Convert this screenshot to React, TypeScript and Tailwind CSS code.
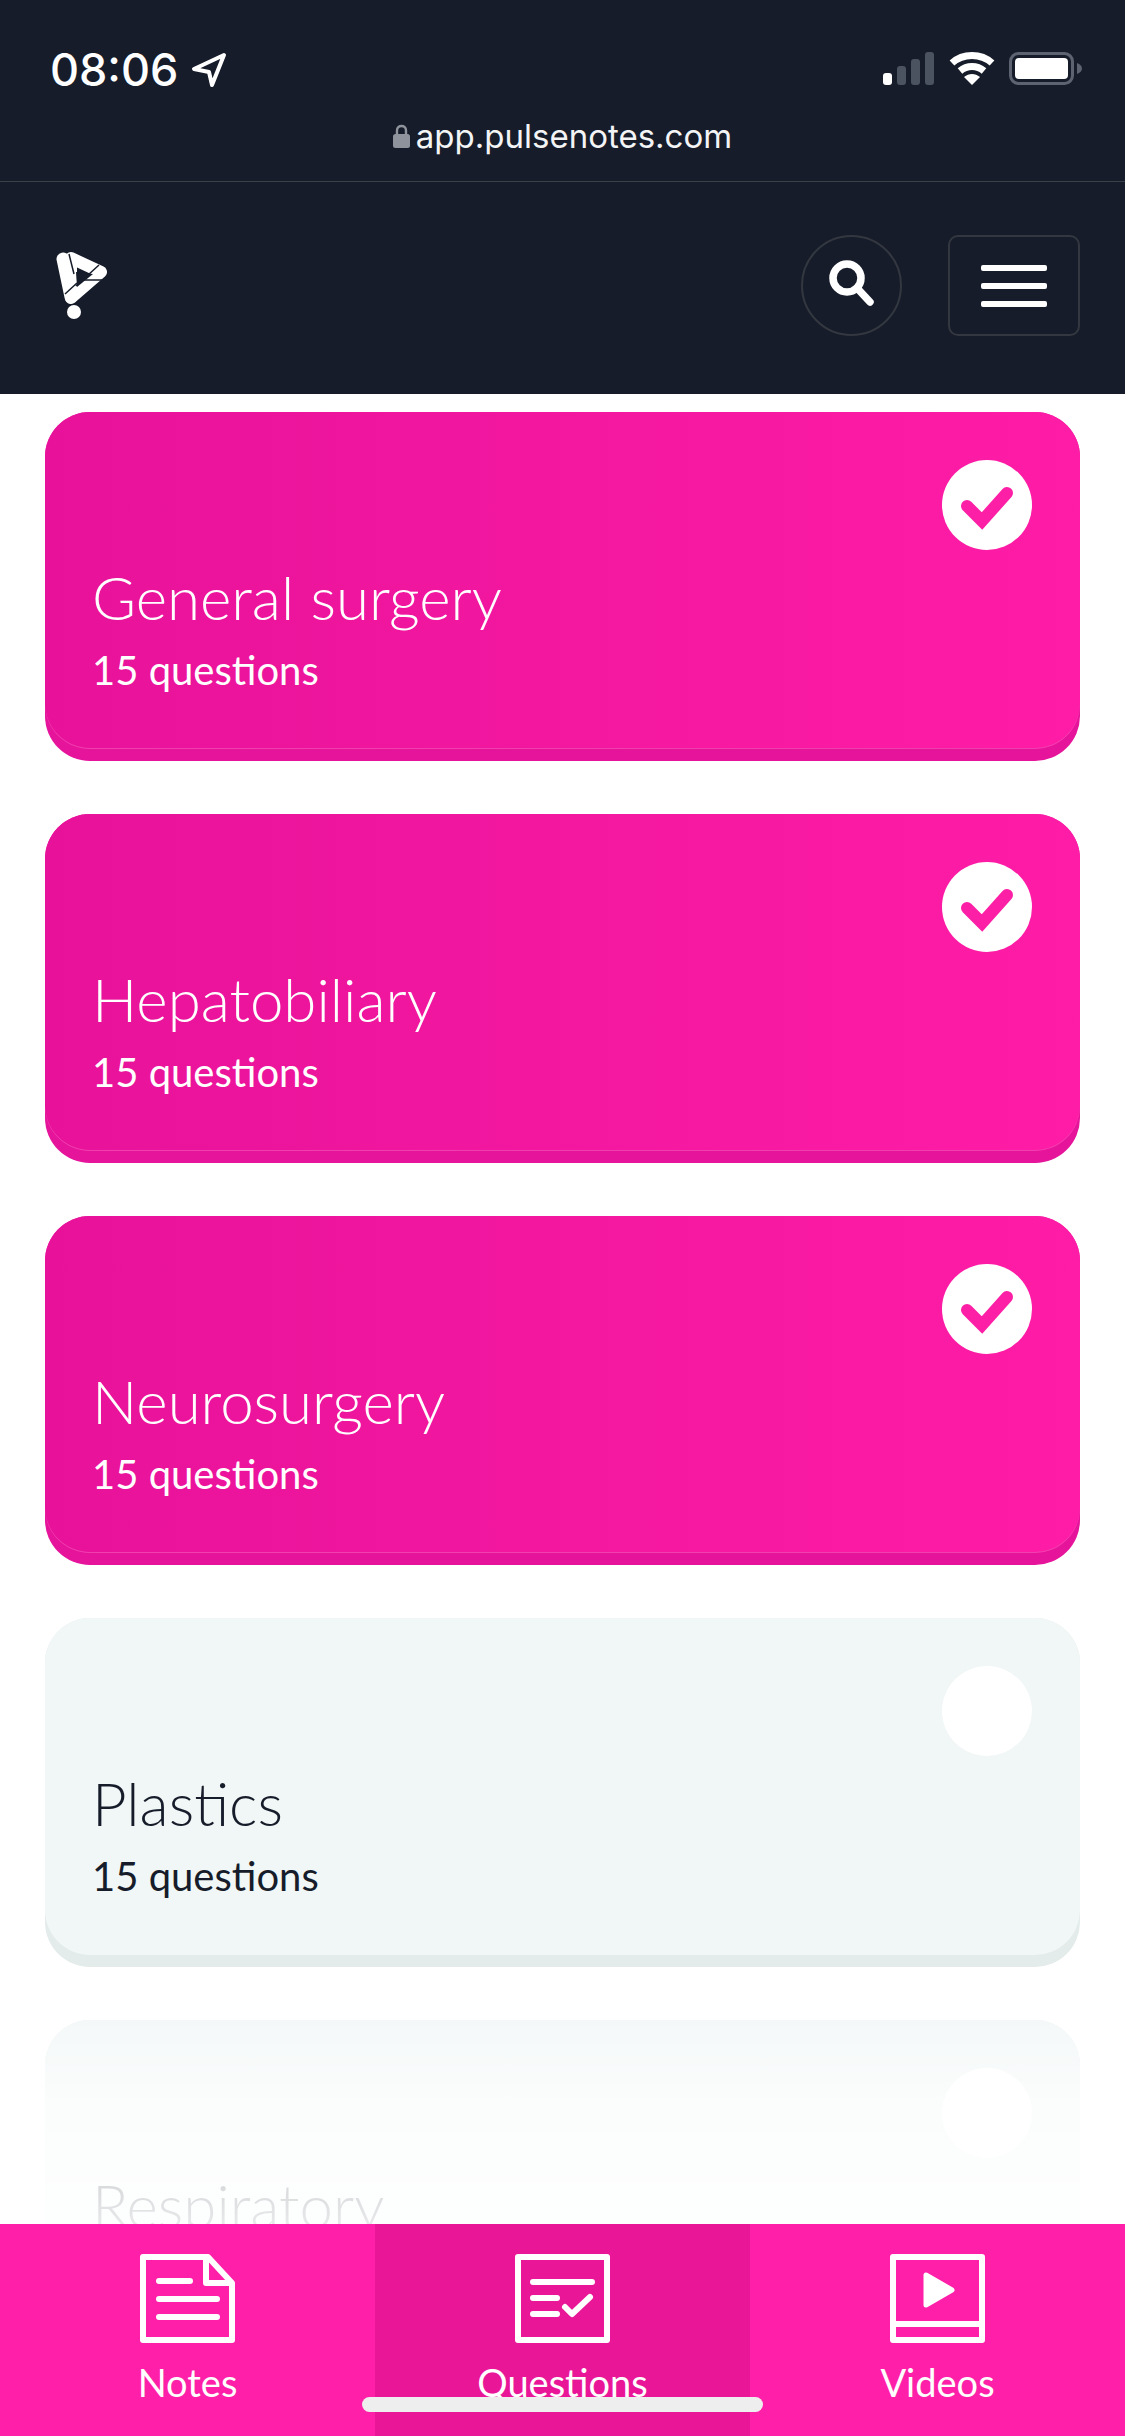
const cards = [
  { title: "General surgery", done: true },
  { title: "Hepatobiliary", done: true },
  { title: "Neurosurgery", done: true },
  { title: "Plastics", done: false },
  { title: "Respiratory", done: false },
];

function Check() {
  return (
    <svg width="90" height="90" viewBox="0 0 90 90" fill="none">
      <circle cx="45" cy="45" r="45" fill="#fff" />
      <path d="M25 46 40 61 65 33" stroke="#fd1fa6" strokeWidth="12" strokeLinecap="round" strokeLinejoin="miter" />
    </svg>
  );
}

function Card({ title, done }: { title: string; done: boolean }) {
  return (
    <div className={done ? "h-[349px] shrink-0 rounded-[45px] bg-[#e5149a] pb-[12px]" : "h-[349px] shrink-0 rounded-[45px] bg-[#e3ecea] pb-[12px]"}>
      <div
        className={
          done
            ? "flex h-full flex-col rounded-[45px] bg-gradient-to-r from-[#e8129a] to-[#ff1ca6] pl-[47px] pr-[48px] pt-[48px] text-white shadow-[inset_0_-1px_0_#f13fb0]"
            : "flex h-full flex-col rounded-[45px] bg-[#f1f6f6] pl-[47px] pr-[48px] pt-[48px] text-[#161c2a]"
        }
      >
        <div className="self-end">
          <Check0 done={done} />
        </div>
        <div className="mt-[11px] font-['Lato'] text-[60px] leading-[72px] font-light">{title}</div>
        <div className="mt-[12px] font-['Lato'] text-[40px] leading-[50px] font-normal">15 questions</div>
      </div>
    </div>
  );
}

function Check0({ done }: { done: boolean }) {
  return done ? <Check /> : <div className="h-[90px] w-[90px] rounded-full bg-white" />;
}

function NotesIcon() {
  return (
    <svg width="96" height="90" viewBox="0 0 96 90" fill="none" stroke="#fff" strokeWidth="6" strokeLinecap="round" strokeLinejoin="round">
      <path d="M3 3H68L92 29V86H3Z" />
      <path d="M66 4V29H91" />
      <path d="M19 27H50M19 45H77M19 63H77" />
    </svg>
  );
}
function QuestionsIcon() {
  return (
    <svg width="96" height="90" viewBox="0 0 96 90" fill="none" stroke="#fff" strokeWidth="6" strokeLinecap="round" strokeLinejoin="round">
      <path d="M3 3H92V86H3Z" />
      <path d="M18 28H77M18 44H42M18 60H42" />
      <path d="M50 53 57 60 75 43" />
    </svg>
  );
}
function VideosIcon() {
  return (
    <svg width="96" height="90" viewBox="0 0 96 90" fill="none" stroke="#fff" strokeWidth="6" strokeLinecap="round" strokeLinejoin="round">
      <path d="M3 3H92V86H3Z" />
      <path d="M3 70H92" strokeLinecap="butt" />
      <path d="M36 21V51L62 36Z" fill="#fff" strokeWidth="5" />
    </svg>
  );
}

const tabs = [
  { label: "Notes", Icon: NotesIcon, active: false },
  { label: "Questions", Icon: QuestionsIcon, active: true },
  { label: "Videos", Icon: VideosIcon, active: false },
];

export default function App() {
  return (
    <div className="relative flex h-[2436px] w-[1125px] flex-col overflow-hidden bg-white font-['Inter',sans-serif]">
      <header className="h-[394px] shrink-0 bg-[#161c2a] text-white">
        <div className="flex h-[182px] flex-col border-b border-[#3c4048]">
          <div className="flex h-[116px] items-start justify-between pl-[50px] pr-[43px] pt-[46px]">
            <div className="flex items-center gap-[13px]">
              <span className="text-[45px] leading-[48px] font-medium">08:06</span>
              <svg width="36" height="36" viewBox="0 0 36 36" fill="none" stroke="#fff" strokeWidth="4" strokeLinejoin="round">
                <path d="M33 3 3 17 18 20 21 33Z" />
              </svg>
            </div>
            <div className="flex items-end gap-[14px] pt-[6px]">
              <svg width="52" height="33" viewBox="0 0 52 33">
                <rect x="0" y="21" width="9" height="12" rx="3" fill="#fff" />
                <rect x="14" y="14" width="9" height="19" rx="3" fill="#4b5260" />
                <rect x="28" y="7" width="9" height="26" rx="3" fill="#4b5260" />
                <rect x="42" y="0" width="9" height="33" rx="3" fill="#4b5260" />
              </svg>
              <svg width="46" height="33" viewBox="0 0 46 33" fill="none" stroke="#fff" strokeWidth="7">
                <path d="M3 11C14 1 32 1 43 11" />
                <path d="M11 19C18 13 28 13 35 19" />
                <path d="M23 33 15 25C20 21 26 21 31 25Z" fill="#fff" stroke="none" />
              </svg>
              <svg width="73" height="33" viewBox="0 0 73 33" fill="none">
                <rect x="1.5" y="1.5" width="62" height="30" rx="8" stroke="#5d6370" strokeWidth="3" />
                <rect x="6" y="6" width="53" height="21" rx="4" fill="#fff" />
                <path d="M68 11C71 12 73 14 73 16.5S71 21 68 22Z" fill="#5d6370" />
              </svg>
            </div>
          </div>
          <div className="flex items-center justify-center gap-[6px]">
            <svg width="17" height="24" viewBox="0 0 17 24" fill="none">
              <path d="M4 11V6.5C4 3.5 6 2 8.5 2S13 3.5 13 6.5V11" stroke="#8f939b" strokeWidth="2.4" />
              <rect x="0" y="10" width="17" height="14" rx="2.5" fill="#8f939b" />
            </svg>
            <span className="text-[33px] leading-[40px] font-normal text-[#f3f4f5]">app.pulsenotes.com</span>
          </div>
        </div>
        <div className="flex items-center justify-between pl-[56px] pr-[45px] pt-[53px]">
          <svg className="mt-[4px]" width="66" height="76" viewBox="26 20 66 76" fill="#fff">
            <path d="M33 29 41 67" stroke="#fff" strokeWidth="13" strokeLinecap="round" />
            <path d="M41 28 71 42 41 68Z" stroke="#fff" strokeWidth="12" strokeLinejoin="round" fill="none" />
            <path d="M46 42 63 44 47 57Z" fill="#161c2a" />
            <path d="M39 24 44 44M69 35 46 56M35 64 47 53M47 50 74 50" stroke="#161c2a" strokeWidth="1.5" fill="none" />
            <circle cx="44" cy="82" r="7" />
          </svg>
          <div className="flex items-center gap-[46px]">
            <div className="flex h-[101px] w-[101px] items-center justify-center rounded-full border-2 border-[#33373f]">
              <svg className="mb-[5px]" width="46" height="46" viewBox="0 0 46 46" fill="none" stroke="#fff" strokeWidth="7.5" strokeLinecap="round">
                <circle cx="18" cy="18" r="14" />
                <path d="M28 28 41 42" />
              </svg>
            </div>
            <div className="flex h-[101px] w-[132px] flex-col items-center justify-center gap-[12px] rounded-[10px] border-2 border-[#33373f]">
              <div className="h-[6px] w-[66px] rounded-[2px] bg-white" />
              <div className="h-[6px] w-[66px] rounded-[2px] bg-white" />
              <div className="h-[6px] w-[66px] rounded-[2px] bg-white" />
            </div>
          </div>
        </div>
      </header>

      <main className="relative flex min-h-0 flex-1 flex-col gap-[53px] overflow-hidden px-[45px] pt-[18px]">
        {cards.map((c) => (
          <Card key={c.title} title={c.title} done={c.done} />
        ))}
        <div className="absolute inset-x-0 bottom-0 h-[250px] bg-gradient-to-b from-white/0 via-white/70 to-white/90" />
      </main>

      <nav className="flex h-[212px] shrink-0 bg-[#ff1fa8] text-white">
        {tabs.map(({ label, Icon, active }) => (
          <div
            key={label}
            className={active ? "flex flex-1 flex-col items-center bg-[#e91698] pt-[30px]" : "flex flex-1 flex-col items-center pt-[30px]"}
          >
            <Icon />
            <span className="mt-[14px] font-['Lato'] text-[38px] leading-[48px]">{label}</span>
          </div>
        ))}
      </nav>
      <div className="absolute bottom-[24px] left-[362px] h-[15px] w-[401px] rounded-full bg-[#eeeeee]" />
    </div>
  );
}
